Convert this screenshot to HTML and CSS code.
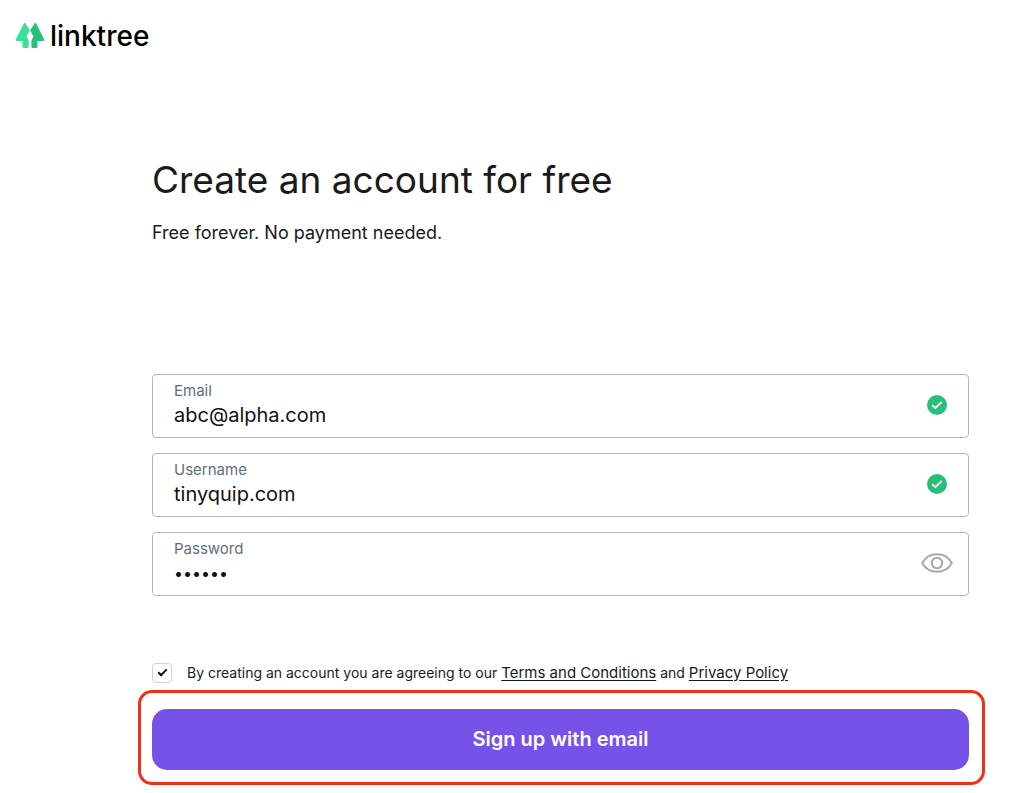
FILE: index.html
```html
<!DOCTYPE html>
<html lang="en">
<head>
  <meta charset="UTF-8">
  <meta name="viewport" content="width=device-width, initial-scale=1.0">
  <title>Linktree</title>
  <link rel="stylesheet" href="styles.css">
</head>
<body>
  <header class="header">
    <a class="logo" href="#">
      <svg class="logo-mark" viewBox="0 0 30 28" aria-hidden="true">
        <path fill="#39e09b" d="M10 .8 L14.8 8.5 L11.6 14.5 L13.6 18.5 V24.5 Q13.6 26 12 26 H9 Q7.5 26 7.5 24.5 V19 H1.5 Q0 19 .8 17.6 L8.8 1.6 Q9.4 .4 10 .8 Z"/>
        <path fill="#28bf7b" d="M20 .8 L15.2 8.5 L18.6 14.5 L16.4 18.5 V24.5 Q16.4 26 18 26 H21 Q22.5 26 22.5 24.5 V19 H28.5 Q30 19 29.2 17.6 L21.2 1.6 Q20.6 .4 20 .8 Z"/>
      </svg>
      <span>linktree</span>
    </a>
  </header>

  <main class="container">
    <h1>Create an account for free</h1>
    <p class="subtitle">Free forever. No payment needed.</p>

    <form class="form">
      <div class="fields">
        <div class="field">
          <div class="field-body">
            <label for="email">Email</label>
            <input type="email" id="email" value="abc@alpha.com">
          </div>
          <svg class="check" viewBox="0 0 20 20" aria-hidden="true">
            <circle cx="10" cy="10" r="10" fill="#28bf7b"/>
            <path d="M5.2 10.3 L8.4 13 L14.8 6.8" fill="none" stroke="#fff" stroke-width="1.8"/>
          </svg>
        </div>
        <div class="field">
          <div class="field-body">
            <label for="username">Username</label>
            <input type="text" id="username" value="tinyquip.com">
          </div>
          <svg class="check" viewBox="0 0 20 20" aria-hidden="true">
            <circle cx="10" cy="10" r="10" fill="#28bf7b"/>
            <path d="M5.2 10.3 L8.4 13 L14.8 6.8" fill="none" stroke="#fff" stroke-width="1.8"/>
          </svg>
        </div>
        <div class="field">
          <div class="field-body">
            <label for="password">Password</label>
            <input type="password" id="password" value="secret">
          </div>
          <button type="button" class="reveal" aria-label="Show password">
            <svg viewBox="0 0 32 20" fill="none" stroke="#a8a8a8" stroke-width="2" aria-hidden="true">
              <path d="M1.2 10 C4.5 4 10 1.2 16 1.2 S27.5 4 30.8 10 C27.5 16 22 18.8 16 18.8 S4.5 16 1.2 10 Z"/>
              <circle cx="16" cy="10" r="5.2"/>
            </svg>
          </button>
        </div>
      </div>

      <div class="terms">
        <input type="checkbox" id="agree" checked>
        <label for="agree">By creating an account you are agreeing to our <a href="#">Terms and Conditions</a> and <a href="#">Privacy Policy</a></label>
      </div>

      <div class="highlight">
        <button type="submit" class="submit">Sign up with email</button>
      </div>
    </form>
  </main>
</body>
</html>
```
FILE: styles.css
```css
*, *::before, *::after { box-sizing: border-box; margin: 0; padding: 0; }
body { font-family: Inter, "Liberation Sans", sans-serif; background: #fff; color: #1a1a1a; }
input, button { font-family: inherit; border: none; background: none; }
a { color: inherit; }

.header { padding: 20px 15px; }
.logo { display: inline-flex; align-items: center; gap: 5px; height: 31px; color: #000; font-size: 28px; font-weight: 500; text-decoration: none; }
.logo-mark { width: 30px; height: 28px; }

.container { padding: 82px 51px 8px 152px; }
h1 { font-size: 37px; font-weight: 400; line-height: 48px; }
.subtitle { margin-top: 15px; font-size: 18px; line-height: 28px; }

.form { margin-top: 127px; }
.fields { display: flex; flex-direction: column; gap: 15px; }
.field { display: flex; align-items: center; padding: 6px 15px 8px 21px; border: 1px solid #b5b5b5; border-radius: 4px; }
.field-body { flex: 1; display: flex; flex-direction: column; }
.field label { color: #5f6f7a; font-size: 15px; line-height: 20px; }
.field input { width: 100%; height: 28px; color: #111; font-size: 20px; outline: none; }
.field input[type="password"] { font-size: 16px; }
.check { width: 20px; height: 20px; margin-right: 6px; }
.reveal { display: flex; cursor: pointer; }
.reveal svg { width: 32px; height: 20px; }

.terms { display: flex; align-items: center; gap: 15px; margin-top: 67px; font-size: 14px; line-height: 20px; }
.terms input { appearance: none; display: grid; place-items: center; width: 20px; height: 20px; border: 1px solid #d2d2d2; border-radius: 4px; }
.terms input:checked::before { content: ""; width: 9px; height: 5px; margin-bottom: 3px; border: solid #111; border-width: 0 0 2px 2px; transform: rotate(-45deg); }
.terms a { font-size: 15px; text-underline-offset: 2px; }

.highlight { margin: 7px -16px 0 -14px; padding: 16px 13px 12px 11px; border: 3px solid #ee3118; border-radius: 14px; }
.submit { display: block; width: 100%; height: 61px; border-radius: 15px; background: #7652e8; color: #fff; font-size: 20px; font-weight: 600; cursor: pointer; }
```
